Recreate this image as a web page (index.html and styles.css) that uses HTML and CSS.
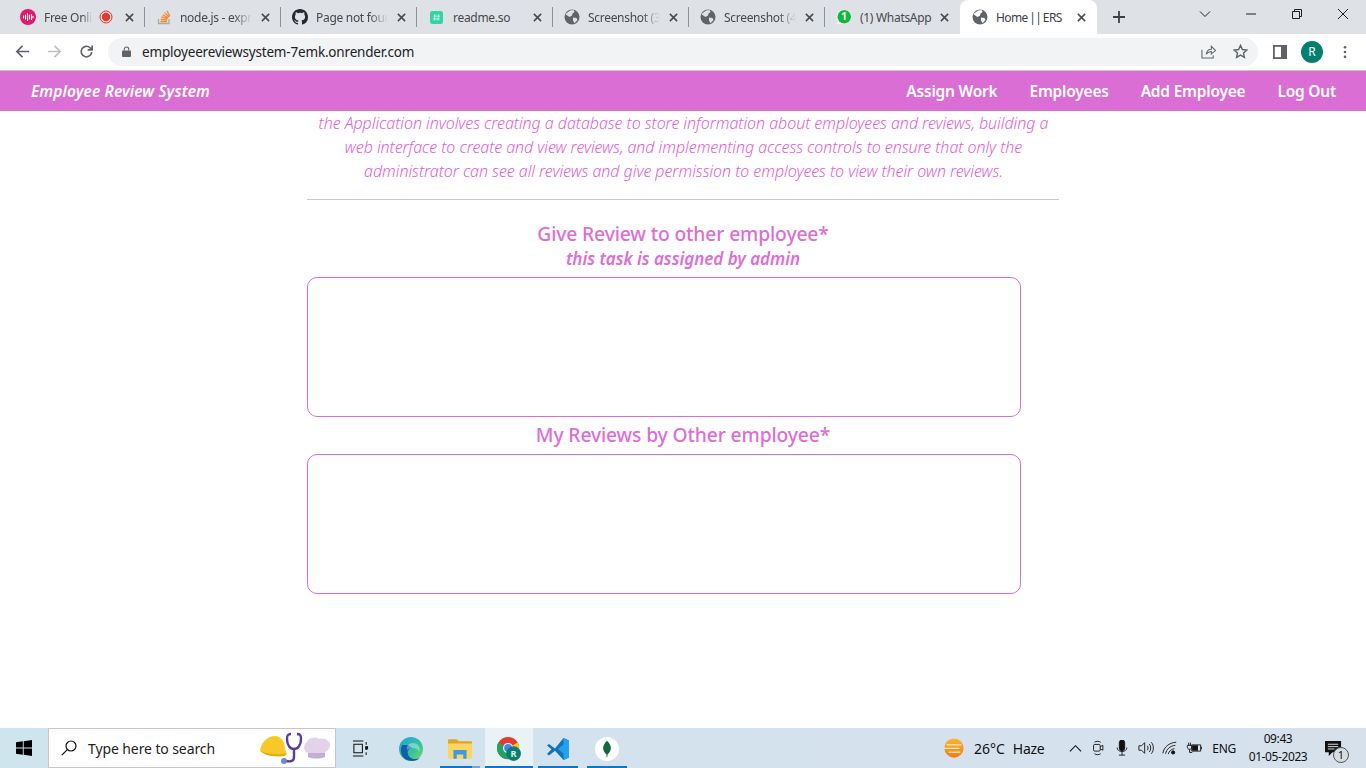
FILE: index.html
```html
<!DOCTYPE html>
<html lang="en">
<head>
  <meta charset="UTF-8">
  <meta name="viewport" content="width=device-width, initial-scale=1.0">
  <title>Home || ERS</title>
  <link rel="stylesheet" href="styles.css">
</head>
<body>
  <!-- browser tabs -->
  <div class="tabstrip">
    <div class="tab">
      <svg class="favicon" viewBox="0 0 16 16"><circle cx="8" cy="8" r="8" fill="#e3176f"/><path d="M3.500 7v2M5.500 6v4M7.500 4.500v7M9.500 6v4M11.500 5.500v5M13 7.200v1.600" stroke="#fff" stroke-width="1.100" stroke-linecap="round"/></svg>
      <span class="tab-title fade short">Free Onli</span>
      <svg class="rec" viewBox="0 0 14 14"><circle cx="7" cy="7" r="6" fill="none" stroke="#e5392b" stroke-width="1"/><circle cx="7" cy="7" r="4.200" fill="#e5392b"/></svg>
      <svg class="tab-x" viewBox="0 0 10 10"><path d="M1 1l8 8M9 1l-8 8"/></svg>
    </div>
    <div class="tab">
      <svg class="favicon" viewBox="0 0 16 16"><path d="M2.500 10v4.500h10.500V10" fill="none" stroke="#b3a89c" stroke-width="1.300"/><path d="M4.500 12.500h6.500M4.700 10.300l6.400.6M5.400 8l6.200 1.700M6.700 5.700l5.500 3.200M8.600 3.600l4.500 4.400M11 1.800l2.800 5.400" stroke="#f08a36" stroke-width="1.300"/></svg>
      <span class="tab-title fade">node.js - expr</span>
      <svg class="tab-x" viewBox="0 0 10 10"><path d="M1 1l8 8M9 1l-8 8"/></svg>
    </div>
    <div class="tab">
      <svg class="favicon" viewBox="0 0 16 16"><path fill="#24292f" d="M8 0C3.580 0 0 3.580 0 8c0 3.540 2.290 6.530 5.470 7.590.4.070.55-.17.550-.38v-1.340c-2.230.48-2.700-1.070-2.700-1.070-.36-.92-.89-1.170-.89-1.170-.73-.5.050-.49.050-.49.800.06 1.230.83 1.230.83.710 1.220 1.870.87 2.330.66.070-.52.280-.87.510-1.070-1.780-.2-3.640-.89-3.640-3.950 0-.87.310-1.590.820-2.150-.08-.2-.36-1.020.080-2.120 0 0 .67-.21 2.200.82A7.600 7.600 0 0 1 8 3.870c.68 0 1.360.09 2 .27 1.530-1.040 2.200-.82 2.200-.82.44 1.100.16 1.920.08 2.120.51.560.820 1.270.820 2.150 0 3.070-1.870 3.750-3.650 3.950.29.250.54.730.54 1.480v2.190c0 .21.150.46.550.38A8 8 0 0 0 16 8c0-4.420-3.580-8-8-8z"/></svg>
      <span class="tab-title fade">Page not foun</span>
      <svg class="tab-x" viewBox="0 0 10 10"><path d="M1 1l8 8M9 1l-8 8"/></svg>
    </div>
    <div class="tab">
      <svg class="favicon small" viewBox="0 0 14 14"><rect width="14" height="14" rx="2.500" fill="#2fd6a0"/><path d="M5.300 3.500l-.8 7M9.300 3.500l-.8 7M3.500 5.500h7.300M3.200 8.500h7.300" stroke="#d8f8ec" stroke-width="1"/></svg>
      <span class="tab-title">readme.so</span>
      <svg class="tab-x" viewBox="0 0 10 10"><path d="M1 1l8 8M9 1l-8 8"/></svg>
    </div>
    <div class="tab">
      <svg class="favicon" viewBox="0 0 16 16"><circle cx="8" cy="8" r="7.500" fill="#5f6368"/><path fill="#dee1e6" d="M6 1.500 9.500 1l1 2-2 1.500L8 6.500 5.500 8l-3-2-1-1zM9 8.500l3.500.5 1 2-3 3.300L9 11.500z"/></svg>
      <span class="tab-title fade">Screenshot (3</span>
      <svg class="tab-x" viewBox="0 0 10 10"><path d="M1 1l8 8M9 1l-8 8"/></svg>
    </div>
    <div class="tab">
      <svg class="favicon" viewBox="0 0 16 16"><circle cx="8" cy="8" r="7.500" fill="#5f6368"/><path fill="#dee1e6" d="M6 1.500 9.500 1l1 2-2 1.500L8 6.500 5.500 8l-3-2-1-1zM9 8.500l3.500.5 1 2-3 3.300L9 11.500z"/></svg>
      <span class="tab-title fade">Screenshot (4</span>
      <svg class="tab-x" viewBox="0 0 10 10"><path d="M1 1l8 8M9 1l-8 8"/></svg>
    </div>
    <div class="tab last">
      <svg class="favicon" viewBox="0 0 16 16"><path fill="#fff" d="M8 .5a7.300 7.300 0 0 0-6.300 11L.6 15.400l4-1A7.300 7.300 0 1 0 8 .5z"/><circle cx="8.200" cy="7.800" r="6.800" fill="#12b83e"/><text x="8.200" y="11.300" class="wa-num">1</text></svg>
      <span class="tab-title">(1) WhatsApp</span>
      <svg class="tab-x" viewBox="0 0 10 10"><path d="M1 1l8 8M9 1l-8 8"/></svg>
    </div>
    <div class="tab active">
      <svg class="favicon" viewBox="0 0 16 16"><circle cx="8" cy="8" r="7.500" fill="#5f6368"/><path fill="#fff" d="M6 1.500 9.500 1l1 2-2 1.500L8 6.500 5.500 8l-3-2-1-1zM9 8.500l3.500.5 1 2-3 3.300L9 11.500z"/></svg>
      <span class="tab-title">Home || ERS</span>
      <svg class="tab-x" viewBox="0 0 10 10"><path d="M1 1l8 8M9 1l-8 8"/></svg>
    </div>
    <svg class="new-tab" viewBox="0 0 12 12"><path d="M6 0v12M0 6h12"/></svg>
    <div class="window-btns">
      <svg class="win-icon" viewBox="0 0 12 12"><path d="M1 3.500l5 5 5-5"/></svg>
      <svg class="win-icon" viewBox="0 0 12 12"><path d="M1 6h10"/></svg>
      <svg class="win-icon" viewBox="0 0 12 12"><path d="M1.500 3.500h7v7h-7zM3.500 3.500v-2h7v7h-2"/></svg>
      <svg class="win-icon" viewBox="0 0 12 12"><path d="M1 1l10 10M11 1L1 11"/></svg>
    </div>
  </div>

  <!-- address bar -->
  <div class="toolbar">
    <svg class="tool-icon back" viewBox="0 0 16 16"><path d="M15 8H2M8 2 2 8l6 6"/></svg>
    <svg class="tool-icon fwd" viewBox="0 0 16 16"><path d="M1 8h13M8 2l6 6-6 6"/></svg>
    <svg class="tool-icon" viewBox="0 0 16 16"><path d="M13.500 8.500A5.600 5.600 0 1 1 11.800 4L14 6.200M14 1.500v4.700H9.300"/></svg>
    <div class="omnibox">
      <svg class="lock" viewBox="0 0 10 12"><path d="M2.500 5V3.500a2.500 2.500 0 0 1 5 0V5" fill="none" stroke="#5f6368" stroke-width="1.200"/><rect y="5" width="10" height="7" rx="1" fill="#5f6368"/></svg>
      <span class="url">employeereviewsystem-7emk.onrender.com</span>
      <svg class="omni-icon share" viewBox="0 0 16 16"><path d="M1 6v9h12v-3M5.500 11c.5-3.500 3-5.500 5.500-5.500V2.500L15.500 7 11 10.500V8c-2 0-4 1-5.500 3z"/></svg>
      <svg class="omni-icon" viewBox="0 0 16 16"><path d="M8 1.500l2 4.400 4.800.5-3.600 3.200 1 4.700L8 11.900l-4.200 2.400 1-4.700L1.200 6.400 6 5.900z" stroke-width="1.500"/></svg>
    </div>
    <svg class="panel-icon" viewBox="0 0 14 14"><rect x=".9" y=".9" width="12.200" height="12.200" fill="#fff" stroke="#5f6368" stroke-width="1.800"/><rect x="8" y="1" width="5" height="12" fill="#5f6368"/></svg>
    <span class="avatar">R</span>
    <svg class="kebab" viewBox="0 0 4 16"><circle cx="2" cy="2.500" r="1.500"/><circle cx="2" cy="8" r="1.500"/><circle cx="2" cy="13.500" r="1.500"/></svg>
  </div>

  <!-- site nav -->
  <nav class="navbar">
    <a class="brand" href="#">Employee Review System</a>
    <ul class="nav-links">
      <li><a href="#">Assign Work</a></li>
      <li><a href="#">Employees</a></li>
      <li><a href="#">Add Employee</a></li>
      <li><a href="#">Log Out</a></li>
    </ul>
  </nav>

  <main class="page">
    <div class="container">
      <p class="about">the Application involves creating a database to store information about employees and reviews, building a web interface to create and view reviews, and implementing access controls to ensure that only the administrator can see all reviews and give permission to employees to view their own reviews.</p>
      <hr class="divider">
      <section class="review-section">
        <h3 class="section-title">Give Review to other employee*</h3>
        <h4 class="section-sub">this task is assigned by admin</h4>
        <div class="review-box"></div>
        <h3 class="section-title second">My Reviews by Other employee*</h3>
        <div class="review-box"></div>
      </section>
    </div>
  </main>

  <!-- windows taskbar -->
  <footer class="taskbar">
    <div class="start">
      <svg class="win-logo" viewBox="0 0 16 16"><path fill="#000" d="M0 2.300 6.800 1.300v6.200H0zM7.700 1.200 16 0v7.500H7.700zM0 8.500h6.800v6.200L0 13.700zM7.700 8.500H16V16l-8.300-1.200z"/></svg>
    </div>
    <div class="search">
      <svg class="search-icon" viewBox="0 0 16 16"><circle cx="10" cy="6" r="5"/><path d="M6.300 9.700.8 15.200"/></svg>
      <span class="search-text">Type here to search</span>
      <svg class="search-art" viewBox="0 0 74 32">
        <path fill="#f7c928" d="M2 19C3 10 10 4 17 4c6 0 10 6 10 13l2 5-3 2C18 25 8 24 2 19z"/>
        <path fill="#e3a90f" d="M2 19c7 3 18 4 27 3l-3 2C18 25 8 24 2 19z"/>
        <path d="M33 2c-3 0-4 1-4 5 0 6 3 10 7 10s7-4 7-10c0-4-1-5-4-5M36 17v8c0 4-3 5-8 4" fill="none" stroke="#5b3b9c" stroke-width="2.400"/>
        <circle cx="26" cy="29" r="3" fill="#6c8fb5"/>
        <path fill="#e2d3ea" d="M50 21c-5-1-5-9-1-11 1-4 9-6 12-3 5-2 12 2 11 7-1 3-2 5-5 6v2H50z"/>
        <path fill="#c3aed2" d="M50 21h17v4c-5 2-12 2-17 0z"/>
      </svg>
    </div>
    <div class="task-apps">
      <div class="task-app plain">
        <svg class="task-view" viewBox="0 0 18 18"><path d="M1 1h11M1 17h11M2 4.500h9v9H2zM15 2v3M15 7.500v3M15 13v3" fill="none" stroke="#111" stroke-width="1.100"/><rect x="14" y="6.500" width="3" height="3.500" fill="#111"/></svg>
      </div>
      <div class="task-app">
        <svg class="app-icon" viewBox="0 0 24 24"><defs><linearGradient id="edge" x1="0" y1="0" x2="1" y2="1"><stop offset="0" stop-color="#1ea7d8"/><stop offset=".6" stop-color="#37c2a0"/><stop offset="1" stop-color="#7fdc5a"/></linearGradient></defs><circle cx="12" cy="12" r="12" fill="url(#edge)"/><path fill="#0f5fa8" d="M3 8C0 15 3 24 13 24c3 0 6-1 8-3-5 2-11 1-12-4-1-3 1-6 4-6-3-4-8-3-10-3z"/><path fill="#fff" d="M13 11c4 0 6 1 7 4 2-5-1-9-6-9-4 0-7 3-6 7 1-1 3-2 5-2z" opacity=".35"/></svg>
      </div>
      <div class="task-app running split">
        <svg class="app-icon" viewBox="0 0 22 20"><path fill="#e0a526" d="M0 2a1 1 0 0 1 1-1h7l2 2h11a1 1 0 0 1 1 1v3H0z"/><path fill="#fcd462" d="M0 5h22v13a1 1 0 0 1-1 1H1a1 1 0 0 1-1-1z"/><path fill="#3d9ae0" d="M5 19v-8h12v8h-3v-4H8v4z"/></svg>
      </div>
      <div class="task-app running current">
        <svg class="app-icon chrome" viewBox="0 0 26 26"><circle cx="12" cy="12" r="12" fill="#e33b2e"/><path fill="#f8c52c" d="M12 12 22.400 6A12 12 0 0 1 12 24z"/><path fill="#1fa463" d="M12 12 12 24A12 12 0 0 1 1.600 6z"/><circle cx="12" cy="12" r="5.500" fill="#fff"/><circle cx="12" cy="12" r="4.300" fill="#4285f4"/><circle cx="18" cy="18" r="8" fill="#0b7d6e"/><text x="18" y="21.500" class="chrome-r">R</text></svg>
      </div>
      <div class="task-app running">
        <svg class="app-icon" viewBox="0 0 24 24"><path fill="#0f74b8" d="M1 8.500 3 7l6 4.500L17.500 1 23 3.500v17L17.500 23 9 13.800 3 18.500l-2-1.500 4.500-4.800z"/><path fill="#22a2ee" d="M17.500 1 23 3.500v17L17.500 23zM17.500 7.500 11.800 12l5.700 4.500z"/></svg>
      </div>
      <div class="task-app running">
        <svg class="app-icon" viewBox="0 0 22 22"><circle cx="11" cy="11" r="11" fill="#fff"/><path fill="#12673f" d="M11 3.500c3 3 3.800 5.500 3.500 7.500-.3 2.500-2 4-3 5l-.2 2.500h-.6L10.500 16c-1-1-2.700-2.500-3-5-.3-2 .5-4.500 3.500-7.500z"/></svg>
      </div>
    </div>
    <div class="weather">
      <svg class="weather-icon" viewBox="0 0 24 24"><defs><linearGradient id="sun" x1="0" y1="0" x2="0" y2="1"><stop offset="0" stop-color="#f9b62d"/><stop offset="1" stop-color="#ee7d16"/></linearGradient></defs><circle cx="12" cy="12" r="10.500" fill="url(#sun)"/><path d="M4 8.500h16M1 12.500h17M6 16.500h13" stroke="#f6e7c9" stroke-width="1.400"/></svg>
      <span class="temp">26°C</span>
      <span class="haze">Haze</span>
    </div>
    <div class="tray">
      <svg class="tray-icon chev" viewBox="0 0 14 14"><path d="M1 10l6-6 6 6"/></svg>
      <svg class="tray-icon" viewBox="0 0 14 18"><rect x="2" y="5" width="7.500" height="7.500" rx="1.500"/><path d="M9.500 7.500l3-1.500v5.500l-3-1.500M3 2.500c2-1.300 5-1.300 7 0M3 15.500c2 1.300 5 1.300 7 0"/></svg>
      <svg class="tray-icon mic" viewBox="0 0 14 18"><rect x="4" y="0" width="6" height="12" rx="3" fill="#111"/><path d="M1.500 8.500c0 6 11 6 11 0M7 13.500V17M3.500 17h7"/></svg>
      <svg class="tray-icon" viewBox="0 0 18 16"><path d="M1 5.500h3l3.500-3.500v12L4 10.500H1zM10.500 5.500c1 1.500 1 3.500 0 5M12.800 3.500c2 2.500 2 6.500 0 9M15 1.500c3 3.500 3 9.500 0 13"/></svg>
      <svg class="tray-icon" viewBox="0 0 18 16"><path d="M1 14C2 7 8 2 16 1.500M4 14.500C5 9.500 9 5.500 15 5M7 14.800C8 11.500 10.500 9.200 14 8.800"/><circle cx="12.500" cy="13" r="1.800" fill="#111"/></svg>
      <svg class="tray-icon" viewBox="0 0 18 14"><path d="M6.500 3.500h10v7h-10zM16.500 6h1v2h-1M3 1v3M5 1v3M1.500 4h5v1.500c0 2-1 3-2.500 3S1.500 7.500 1.500 5.500zM4 8.500V12h3"/><rect x="7.500" y="4.500" width="5.500" height="5" fill="#111"/></svg>
      <span class="lang">ENG</span>
    </div>
    <div class="clock">
      <span>09:43</span>
      <span>01-05-2023</span>
    </div>
    <div class="notify">
      <svg class="notify-icon" viewBox="0 0 18 18"><path fill="#111" d="M0 1h17v12H8l-4 4v-4H0z"/><path d="M3 4.500h11M3 7h11M3 9.500h7" stroke="#dbe6ee" stroke-width="1"/></svg>
      <span class="notify-count">1</span>
    </div>
  </footer>
</body>
</html>
```

FILE: styles.css
```css
* {
  box-sizing: border-box;
}

html, body {
  height: 100%;
}

body {
  margin: 0;
  width: 1366px;
  height: 768px;
  overflow: hidden;
  display: flex;
  flex-direction: column;
  background: #fff;
  font-family: "Noto Sans", "Open Sans", sans-serif;
}

/* tabs */
.tabstrip {
  height: 34px;
  flex: none;
  display: flex;
  align-items: center;
  padding-left: 9px;
  background: #dee1e6;
}

.tab {
  width: 136px;
  height: 34px;
  flex: none;
  position: relative;
  display: flex;
  align-items: center;
  padding: 0 9px 0 11px;
  color: #45494e;
}

.tab::after {
  content: "";
  position: absolute;
  right: 0;
  top: 7px;
  width: 1px;
  height: 20px;
  background: #8f9296;
}

.tab.last {
  width: 135px;
}

.tab.last::after,
.tab.active::after {
  display: none;
}

.tab.active {
  width: 137px;
  padding-left: 12px;
  background: #fff;
  border-radius: 8px 8px 0 0;
  color: #3c4043;
}

.tab.active .tab-title {
  letter-spacing: -0.6px;
  word-spacing: -1px;
}

.favicon {
  width: 16px;
  height: 16px;
  flex: none;
  margin-right: 8px;
}

.favicon.small {
  width: 13px;
  height: 13px;
  margin: 0 10px 0 2px;
}

.tab-title {
  flex: 1;
  min-width: 0;
  font-size: 12px;
  letter-spacing: -0.3px;
  white-space: nowrap;
}

.tab-title.fade {
  -webkit-mask-image: linear-gradient(to right, #000 72%, transparent 96%);
  mask-image: linear-gradient(to right, #000 72%, transparent 96%);
}

.tab-title.short {
  flex: none;
  -webkit-mask-image: linear-gradient(to right, #000 80%, transparent 100%);
  mask-image: linear-gradient(to right, #000 80%, transparent 100%);
}

.rec {
  width: 14px;
  height: 14px;
  flex: none;
  margin: 0 0 0 auto;
}

.tab-x {
  width: 9px;
  height: 9px;
  flex: none;
  margin: 0 2px 0 6px;
  fill: none;
  stroke: #45494e;
  stroke-width: 1.700;
}

.rec + .tab-x {
  margin-left: 12px;
}

.wa-num {
  fill: #fff;
  font-size: 10px;
  font-weight: 700;
  text-anchor: middle;
}

.new-tab {
  width: 12px;
  height: 12px;
  flex: none;
  margin-left: 16px;
  fill: none;
  stroke: #3c4043;
  stroke-width: 1.800;
}

.window-btns {
  margin-left: auto;
  height: 34px;
  display: flex;
  align-items: flex-start;
  padding: 8px 17px 0 0;
  gap: 34px;
}

.win-icon {
  width: 12px;
  height: 12px;
  fill: none;
  stroke: #202124;
  stroke-width: 1;
}

/* address bar */
.toolbar {
  height: 37px;
  flex: none;
  display: flex;
  align-items: center;
  padding: 0 16px 1px 15px;
  background: #fff;
  border-bottom: 1px solid #c9c4cc;
}

.tool-icon {
  width: 15px;
  height: 15px;
  flex: none;
  margin-right: 17px;
  fill: none;
  stroke: #5f6368;
  stroke-width: 1.800;
}

.tool-icon.fwd {
  stroke: #bdc1c6;
}

.omnibox {
  width: 1150px;
  height: 28px;
  flex: none;
  margin-left: -3px;
  display: flex;
  align-items: center;
  padding: 0 10px 0 14px;
  background: #f1f3f4;
  border-radius: 14px;
}

.lock {
  width: 9px;
  height: 11px;
  flex: none;
  margin-right: 11px;
}

.url {
  flex: 1;
  font-size: 13.500px;
  letter-spacing: -0.18px;
  color: #202124;
}

.omni-icon {
  width: 15px;
  height: 15px;
  flex: none;
  margin-left: 17px;
  fill: none;
  stroke: #5f6368;
  stroke-width: 1.100;
}

.panel-icon {
  width: 14px;
  height: 14px;
  flex: none;
  margin-left: 15px;
}

.avatar {
  width: 22px;
  height: 22px;
  flex: none;
  margin-left: 14px;
  display: flex;
  align-items: center;
  justify-content: center;
  border-radius: 50%;
  background: #01806f;
  color: #fff;
  font-size: 12px;
}

.kebab {
  width: 4px;
  height: 14px;
  flex: none;
  margin-left: 20px;
  fill: #5f6368;
}

/* site nav */
.navbar {
  height: 40px;
  flex: none;
  display: flex;
  align-items: center;
  justify-content: space-between;
  padding: 0 30px 0 31px;
  background: #da6ed5;
}

.brand {
  color: #fff;
  font-size: 15.500px;
  font-style: italic;
  font-weight: 600;
  letter-spacing: 0.1px;
  text-decoration: none;
}

.nav-links {
  display: flex;
  gap: 32px;
  margin: 0;
  padding: 0;
  list-style: none;
}

.nav-links a {
  color: #fff;
  font-size: 15.500px;
  font-weight: 600;
  letter-spacing: -0.22px;
  text-decoration: none;
}

/* page body */
.page {
  flex: 1;
  min-height: 0;
  overflow: hidden;
}

.container {
  width: 752px;
  margin-left: 307px;
}

.about {
  margin: 0;
  padding: 0 9px 0 10px;
  color: #df5fd7;
  font-size: 16px;
  font-style: italic;
  font-weight: 300;
  line-height: 24px;
  letter-spacing: -0.05px;
  text-align: center;
}

.divider {
  height: 1px;
  margin: 16px 0 0;
  border: 0;
  background: #c9c9c9;
}

.review-section {
  width: 714px;
}

.section-title {
  margin: 22px 0 0;
  padding-left: 38px;
  color: #dc6ed6;
  font-size: 19.300px;
  font-weight: 500;
  line-height: 24px;
  letter-spacing: -0.13px;
  text-align: center;
}

.section-title.second {
  margin-top: 6px;
}

.section-sub {
  margin: 1px 0 6px;
  padding-left: 38px;
  color: #dc6ed6;
  font-size: 17px;
  font-style: italic;
  font-weight: 600;
  line-height: 24px;
  letter-spacing: -0.03px;
  text-align: center;
}

.review-box {
  height: 140px;
  border: 1px solid #da6ed5;
  border-radius: 10px;
}

.section-title.second + .review-box {
  margin-top: 7px;
}

/* taskbar */
.taskbar {
  height: 40px;
  flex: none;
  display: flex;
  align-items: center;
  background: linear-gradient(to right, #cfe5ee, #d4e2ee 50%, #d6e1ec);
  color: #111;
}

.start {
  width: 48px;
  display: flex;
  justify-content: center;
}

.win-logo {
  width: 16px;
  height: 16px;
}

.search {
  width: 288px;
  height: 40px;
  flex: none;
  display: flex;
  align-items: center;
  padding: 0 3px 0 12px;
  background: #fff;
  border: 1px solid #c4c8cc;
}

.search-icon {
  width: 16px;
  height: 16px;
  flex: none;
  fill: none;
  stroke: #111;
  stroke-width: 1.200;
}

.search-text {
  margin-left: 11px;
  font-size: 14px;
  letter-spacing: -0.1px;
  color: #222;
}

.search-art {
  width: 74px;
  height: 32px;
  margin-left: auto;
  overflow: visible;
}

.task-apps {
  display: flex;
}

.task-app {
  width: 48px;
  height: 40px;
  margin-right: 1px;
  display: flex;
  align-items: center;
  justify-content: center;
  padding-top: 1px;
}

.task-app.plain {
  margin-right: 3px;
}

.task-app.running {
  background: linear-gradient(#0078d4, #0078d4) no-repeat center bottom / 40px 2px;
}

.task-app.split {
  background: linear-gradient(to right, #0078d4 80%, #6aa9de 80%) no-repeat center bottom / 40px 2px;
}

.task-app.current {
  background: linear-gradient(#0078d4, #0078d4) no-repeat center bottom / 48px 2px, #e9f2f7;
}

.task-view {
  width: 17px;
  height: 17px;
}

.app-icon {
  width: 24px;
  height: 24px;
}

.chrome-r {
  fill: #d7f0ea;
  font-size: 10px;
  font-weight: 700;
  text-anchor: middle;
}

.weather {
  margin-left: auto;
  display: flex;
  align-items: center;
  font-size: 14px;
}

.weather-icon {
  width: 22px;
  height: 22px;
  margin-right: 9px;
}

.haze {
  margin-left: 8px;
  letter-spacing: -0.3px;
}

.tray {
  display: flex;
  align-items: center;
  margin-left: 25px;
  gap: 8px;
}

.tray-icon {
  width: 16px;
  height: 16px;
  fill: none;
  stroke: #111;
  stroke-width: 1;
}

.tray-icon.chev {
  width: 13px;
  height: 13px;
  stroke-width: 1.200;
}

.lang {
  margin-left: 2px;
  font-size: 12px;
  letter-spacing: -0.3px;
}

.clock {
  width: 80px;
  margin-left: 2px;
  display: flex;
  flex-direction: column;
  align-items: center;
  font-size: 12px;
  line-height: 18px;
  letter-spacing: -0.4px;
}

.notify {
  position: relative;
  width: 48px;
  padding-left: 7px;
}

.notify-icon {
  display: block;
  width: 17px;
  height: 17px;
}

.notify-count {
  position: absolute;
  left: 15px;
  top: 7px;
  width: 16px;
  height: 16px;
  display: flex;
  align-items: center;
  justify-content: center;
  border-radius: 50%;
  background: #d5dde3;
  border: 1px solid #555;
  font-size: 11px;
}
```
